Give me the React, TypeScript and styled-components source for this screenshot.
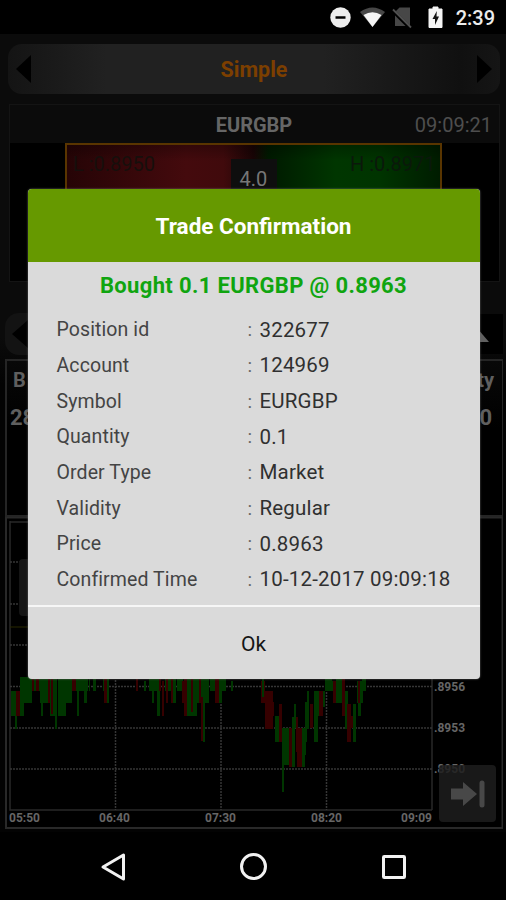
import React from "react";
import styled, { createGlobalStyle } from "styled-components";

const GlobalStyle = createGlobalStyle`
  * { box-sizing: border-box; }
  body { margin: 0; background: #000; font-family: Roboto, "Liberation Sans", sans-serif; }
`;

const Screen = styled.div`
  position: relative;
  display: flex;
  flex-direction: column;
  width: 506px;
  height: 900px;
  overflow: hidden;
  background: #000;
`;

const StatusBar = styled.header`
  display: flex;
  align-items: center;
  justify-content: flex-end;
  height: 34px;
  padding: 1px 11px 0 0;
  color: #ececec;
`;

const Clock = styled.span`
  margin-left: 13px;
  font-size: 20px;
  font-weight: 500;
  line-height: 34px;
`;

const Workspace = styled.main`
  display: flex;
  flex-direction: column;
  height: 798px;
  padding: 10px 3px 0 5px;
  background: linear-gradient(#0b0b0b 0 38%, #030303 44% 100%);
`;

const Selector = styled.div`
  display: flex;
  align-items: center;
  justify-content: space-between;
  height: 50px;
  margin: 0 3px;
  padding: 0 8px;
  flex-shrink: 0;
  border-radius: 14px;
  background: linear-gradient(90deg, #141414, #212121 20%, #212121 64%, #101010 92%, #151515);
`;

const SelectorTitle = styled.span`
  padding-top: 1px;
  color: #7c3f00;
  font-size: 21.5px;
  font-weight: 700;
`;

const QuotePanel = styled.section`
  height: 178px;
  margin: 10px 3px 0 4px;
  flex-shrink: 0;
  border: 1px solid #141414;
  background: #000;
`;

const QuoteHeader = styled.div`
  display: grid;
  grid-template-columns: 1fr auto 1fr;
  align-items: center;
  height: 38px;
  padding: 2px 7px 0 6px;
  background: #0b0b0b;
  color: #666;
  font-size: 20px;
`;

const QuoteSymbol = styled.strong`
  font-weight: 700;
`;

const QuoteTime = styled.span`
  text-align: right;
  color: #4e4e4e;
  font-size: 20px;
`;

const RangeBox = styled.div`
  display: flex;
  justify-content: space-between;
  align-items: flex-start;
  width: 377px;
  height: 120px;
  margin-left: 55px;
  border: 2px solid #593500;
  background:
    linear-gradient(#0004, transparent 16px),
    linear-gradient(90deg, #260406, #440a0d 32%, #400a0c 42%, #190405 50%, #001a00 54%, #003600 72%, #003400 84%, #001c00);
`;

const RangeValue = styled.span`
  width: 96px;
  padding: 8px 6px;
  color: #160f0c;
  font-size: 20px;
  line-height: 22px;
  white-space: nowrap;

  &:last-child {
    color: #0b180b;
  }
`;

const Spread = styled.span`
  width: 46px;
  height: 50px;
  margin-top: 14px;
  background: #0e0e0e;
  color: #777;
  font-size: 20px;
  line-height: 41px;
  text-align: center;
`;

const DepthBar = styled.div`
  display: flex;
  justify-content: space-between;
  align-items: center;
  height: 42px;
  margin: 31px 0 0;
  flex-shrink: 0;
`;

const BackTab = styled.div`
  display: flex;
  align-items: center;
  width: 80px;
  height: 42px;
  padding-left: 7px;
  border-radius: 14px;
  background: #131313;
`;

const ExpandTab = styled.div`
  display: flex;
  align-items: center;
  justify-content: flex-end;
  width: 60px;
  height: 40px;
  padding: 2px 14px 0 0;
  background: #000;
`;

const DepthPanel = styled.section`
  height: 158px;
  margin: 4px 0 0;
  padding: 8px 8px 0 6px;
  flex-shrink: 0;
  border: 2px solid #252525;
  border-right-width: 1px;
  background: linear-gradient(#080808, #000 44%);
  color: #5f5f5f;
`;

const DepthLine = styled.div<{ $large?: boolean }>`
  display: flex;
  justify-content: space-between;
  height: 38px;
  margin-left: ${(p) => (p.$large ? "-3px" : 0)};
  padding-right: ${(p) => (p.$large ? "2px" : 0)};
  font-size: ${(p) => (p.$large ? 22 : 20)}px;
  font-weight: 700;
  line-height: 22px;
`;

const ChartPanel = styled.section`
  position: relative;
  width: 498px;
  height: 312px;
  flex-shrink: 0;
`;

const Handle = styled.div`
  position: absolute;
  left: 14px;
  top: 42px;
  width: 16px;
  height: 57px;
  border-radius: 4px;
  background: #151515;
`;

const LatestButton = styled.button`
  position: absolute;
  right: 7px;
  bottom: 7px;
  display: grid;
  place-items: center;
  width: 57px;
  height: 57px;
  padding: 0;
  border: 0;
  border-radius: 4px;
  background: rgba(29, 29, 29, 0.85);
`;

const NavBar = styled.nav`
  display: flex;
  align-items: center;
  justify-content: space-between;
  height: 68px;
  padding: 2px 99px 0 100px;
  background: #000;
`;

const Overlay = styled.div`
  position: absolute;
  inset: 0;
  display: flex;
  justify-content: center;
  align-items: flex-start;
  padding: 189px 0 0 1px;
`;

const Dialog = styled.section`
  display: flex;
  flex-direction: column;
  width: 452px;
  height: 490px;
  overflow: hidden;
  border-radius: 4px;
  background: #dadada;
  box-shadow: 0 0 2px #777;
`;

const DialogHeader = styled.h1`
  height: 73px;
  margin: 0;
  padding-top: 1px;
  background: #690;
  color: #fff;
  font-size: 22.5px;
  font-weight: 700;
  line-height: 73px;
  text-align: center;
`;

const Summary = styled.h2`
  height: 50px;
  margin: 0;
  color: #10a510;
  font-size: 22px;
  font-weight: 700;
  letter-spacing: 0.35px;
  line-height: 47px;
  text-align: center;
`;

const Details = styled.dl`
  display: grid;
  grid-template-columns: 190px 13px 1fr;
  grid-auto-rows: 35.65px;
  align-items: center;
  height: 293px;
  margin: 0;
  padding-left: 29px;
  white-space: nowrap;
`;

const Label = styled.dt`
  color: #444;
  font-size: 19.5px;
  letter-spacing: 0.1px;
`;

const Colon = styled.span`
  padding-left: 1px;
  color: #666;
  font-size: 19px;
`;

const Value = styled.dd`
  margin: 0;
  color: #303030;
  font-size: 20.5px;
  letter-spacing: 0.18px;
`;

const OkButton = styled.button`
  flex: 1;
  padding: 1px 0 0;
  border: 0;
  border-top: 2px solid #f6f6f6;
  background: transparent;
  color: #151515;
  font: 400 21px Roboto, sans-serif;
`;

const details: [string, string][] = [
  ["Position id", "322677"],
  ["Account", "124969"],
  ["Symbol", "EURGBP"],
  ["Quantity", "0.1"],
  ["Order Type", "Market"],
  ["Validity", "Regular"],
  ["Price", "0.8963"],
  ["Confirmed Time", "10-12-2017 09:09:18"],
];

const GREEN = "#003600";
const RED = "#360000";

// x, top, width, bottom, colour
const bars: [number, number, number, number, string][] = [
  [6, 174, 5, 199, GREEN], [10, 190, 2, 212, GREEN], [11, 174, 4, 199, RED], [15, 160, 4, 199, GREEN],
  [17, 160, 10, 186, GREEN], [27, 160, 2, 174, RED], [29, 160, 8, 174, GREEN], [31, 162, 3, 174, RED],
  [35, 160, 9, 186, GREEN], [36, 180, 2, 199, GREEN], [43, 160, 2, 186, RED], [45, 160, 7, 199, GREEN],
  [46, 162, 2, 197, RED], [50, 190, 2, 212, GREEN], [53, 160, 8, 199, GREEN], [61, 160, 6, 186, GREEN],
  [67, 160, 4, 174, RED], [71, 160, 12, 174, GREEN], [72, 170, 2, 199, GREEN], [79, 170, 3, 186, GREEN],
  [84, 160, 1, 174, GREEN], [88, 160, 3, 174, GREEN], [98, 160, 2, 174, GREEN], [99, 160, 3, 186, RED],
  [102, 162, 2, 186, GREEN], [131, 160, 2, 174, RED], [139, 164, 2, 174, GREEN], [144, 160, 8, 174, GREEN],
  [147, 165, 2, 186, GREEN], [152, 160, 3, 199, GREEN], [154, 160, 2, 174, RED], [157, 164, 2, 199, RED],
  [160, 160, 9, 174, GREEN], [161, 160, 2, 186, RED], [166, 160, 2, 186, RED], [168, 160, 3, 186, GREEN],
  [172, 160, 6, 174, GREEN], [177, 164, 2, 186, RED], [179, 160, 3, 199, RED], [182, 160, 10, 199, GREEN],
  [186, 162, 2, 195, RED], [192, 160, 12, 186, GREEN], [194, 160, 2, 186, RED], [196, 180, 2, 224, RED],
  [198, 160, 2, 225, GREEN], [205, 160, 5, 174, GREEN], [210, 160, 4, 186, RED], [214, 160, 3, 186, GREEN],
  [217, 160, 4, 174, GREEN], [226, 164, 2, 174, GREEN], [256, 164, 4, 186, RED], [260, 174, 8, 212, RED],
  [257, 160, 2, 180, GREEN], [268, 185, 1, 199, RED], [270, 199, 4, 225, GREEN], [274, 187, 3, 225, RED],
  [277, 211, 2, 275, GREEN], [278, 211, 6, 248, GREEN], [284, 211, 3, 250, RED], [287, 200, 3, 250, GREEN],
  [289, 187, 2, 211, GREEN], [291, 200, 2, 235, RED], [292, 211, 6, 250, RED], [297, 211, 3, 250, GREEN],
  [299, 211, 2, 238, GREEN], [300, 185, 2, 225, GREEN], [302, 174, 2, 212, GREEN], [305, 187, 3, 211, RED],
  [309, 174, 4, 225, GREEN], [311, 174, 3, 199, GREEN], [314, 174, 4, 199, RED], [318, 174, 2, 190, GREEN],
  [320, 160, 7, 174, GREEN], [327, 164, 4, 174, GREEN], [328, 164, 3, 186, RED], [331, 160, 6, 186, GREEN],
  [337, 160, 3, 199, RED], [340, 174, 3, 212, GREEN], [342, 187, 4, 225, RED], [346, 199, 4, 211, RED],
  [348, 187, 3, 225, GREEN], [352, 164, 6, 186, GREEN], [353, 186, 3, 199, GREEN], [353, 164, 2, 186, RED],
  [357, 160, 4, 174, GREEN],
];

function PriceChart() {
  return (
    <svg width="498" height="312" viewBox="0 0 498 312">
      <rect x="1" y="0.5" width="496.5" height="310.5" fill="#000" stroke="#292929" strokeWidth="2" />
      <path d="M5 5H427V293M5 4V293H427" fill="none" stroke="#292929" strokeWidth="1.5" />
      <path d="M5 45H427M5 87H427M5 128H427M5 169.5H427M5 211H427M5 252H427" stroke="#363636" strokeWidth="1.3" strokeDasharray="2 1" />
      <path d="M110.5 4V293M216 4V293M321.5 4V293" stroke="#363636" strokeWidth="1.5" strokeDasharray="2 1" />
      <path d="M5 110H427" stroke="#282800" />
      {bars.map(([x, top, width, bottom, color], i) => (
        <rect key={i} x={x} y={top} width={width} height={bottom - top} fill={color} />
      ))}
      <g fill="#666" fontFamily="Roboto, sans-serif" fontSize="12" fontWeight="700">
        <text x="4" y="304.5">05:50</text>
        <text x="94" y="304.5">06:40</text>
        <text x="200" y="304.5">07:30</text>
        <text x="306" y="304.5">08:20</text>
        <text x="396" y="304.5">09:09</text>
        <text x="429" y="174">.8956</text>
        <text x="429" y="215">.8953</text>
        <text x="429" y="256">.8950</text>
      </g>
    </svg>
  );
}

function StatusIcons() {
  return (
    <svg width="114" height="34" viewBox="0 0 114 34">
      <circle cx="11.5" cy="16.5" r="10.2" fill="#ededed" />
      <path d="M6.5 16.5H16.5" stroke="#000" strokeWidth="2.5" />
      <path d="M31 11Q43.5 2 56 11L43.5 26Z" fill="#474747" />
      <path d="M34.5 14Q43.5 8.5 52.5 14L43.5 26Z" fill="#f5f5f5" />
      <path d="M70.5 6.5H81V25H66V11Z" fill="#474747" />
      <path d="M62.5 8.5L81 27" stroke="#000" strokeWidth="3.5" />
      <path d="M64 8.5L82 26.5" stroke="#505050" strokeWidth="1.8" />
      <path d="M104 6V8H100V26.5H113V8H109V6Z" fill="#f4f4f4" stroke="#f4f4f4" strokeLinejoin="round" />
      <path d="M107.8 10L103.5 18H106V24L110 15.5H107.5Z" fill="#111" />
    </svg>
  );
}

export default function App() {
  return (
    <Screen>
      <GlobalStyle />
      <StatusBar>
        <StatusIcons />
        <Clock>2:39</Clock>
      </StatusBar>
      <Workspace>
        <Selector>
          <svg width="16" height="28" viewBox="0 0 16 28"><path d="M15 0V28L0 14Z" fill="#000" /></svg>
          <SelectorTitle>Simple</SelectorTitle>
          <svg width="16" height="28" viewBox="0 0 16 28"><path d="M1 0V28L16 14Z" fill="#000" /></svg>
        </Selector>
        <QuotePanel>
          <QuoteHeader>
            <span />
            <QuoteSymbol>EURGBP</QuoteSymbol>
            <QuoteTime>09:09:21</QuoteTime>
          </QuoteHeader>
          <RangeBox>
            <RangeValue>L :0.8950</RangeValue>
            <Spread>4.0</Spread>
            <RangeValue>H :0.8971</RangeValue>
          </RangeBox>
        </QuotePanel>
        <DepthBar>
          <BackTab>
            <svg width="16" height="28" viewBox="0 0 16 28"><path d="M16 0V28L0 14Z" fill="#000" /></svg>
          </BackTab>
          <ExpandTab>
            <svg width="24" height="14" viewBox="0 0 24 14"><path d="M0 14L12 0L24 14Z" fill="#606060" /></svg>
          </ExpandTab>
        </DepthBar>
        <DepthPanel>
          <DepthLine><span>B</span><span>Qty</span></DepthLine>
          <DepthLine $large><span>28</span><span>0</span></DepthLine>
        </DepthPanel>
        <ChartPanel>
          <PriceChart />
          <Handle />
          <LatestButton aria-label="Go to latest">
            <svg width="36" height="28" viewBox="0 0 36 28">
              <path d="M1 8.5H13V2L27 14L13 26V19.5H1Z" fill="#484848" />
              <path d="M32 3V25" stroke="#484848" strokeWidth="5" strokeLinecap="round" />
            </svg>
          </LatestButton>
        </ChartPanel>
      </Workspace>
      <NavBar>
        <svg width="28" height="30" viewBox="0 0 28 30"><path d="M23.5 3V27L3 15Z" fill="none" stroke="#f2f2f2" strokeWidth="3" strokeLinejoin="round" /></svg>
        <svg width="30" height="30" viewBox="0 0 30 30"><circle cx="13.5" cy="14.5" r="12" fill="none" stroke="#f2f2f2" strokeWidth="3" /></svg>
        <svg width="26" height="28" viewBox="0 0 26 28"><rect x="2.5" y="3.5" width="21" height="21" rx="0.8" fill="none" stroke="#f2f2f2" strokeWidth="3" /></svg>
      </NavBar>
      <Overlay>
        <Dialog role="dialog" aria-modal="true">
          <DialogHeader>Trade Confirmation</DialogHeader>
          <Summary>Bought 0.1 EURGBP @ 0.8963</Summary>
          <Details>
            {details.map(([label, value]) => (
              <React.Fragment key={label}>
                <Label>{label}</Label>
                <Colon>:</Colon>
                <Value>{value}</Value>
              </React.Fragment>
            ))}
          </Details>
          <OkButton>Ok</OkButton>
        </Dialog>
      </Overlay>
    </Screen>
  );
}
